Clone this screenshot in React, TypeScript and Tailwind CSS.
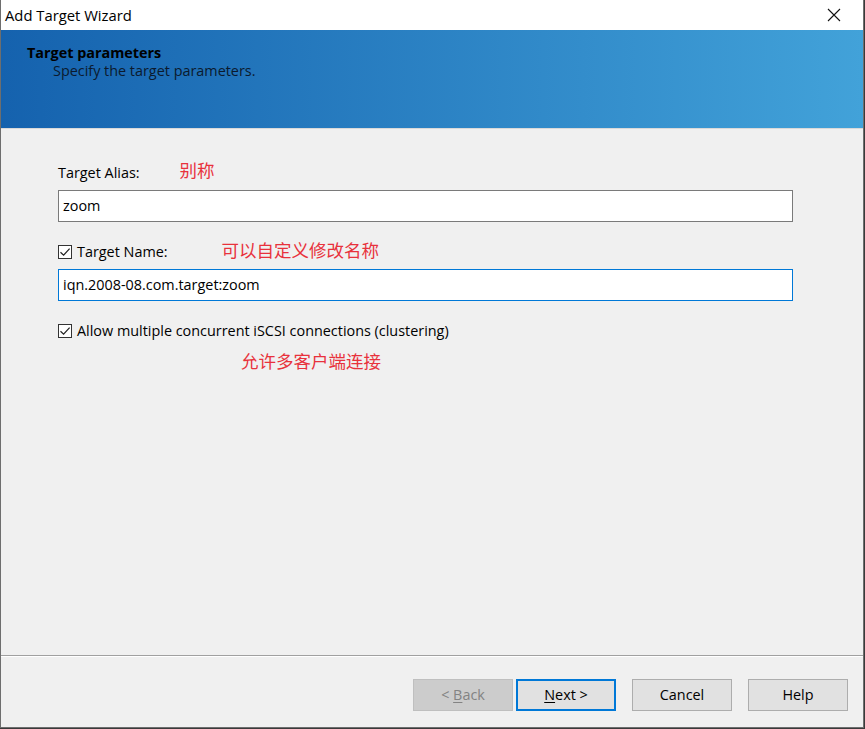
import React from 'react';

const font = { fontFamily: '"Open Sans", "Noto Sans", sans-serif' };

const CheckBox = () => (
  <span className="w-[14px] h-[14px] border border-[#333333] bg-white flex items-center justify-center shrink-0">
    <svg width="12" height="12" viewBox="0 0 12 12" fill="none">
      <path d="M1.5 6.2 L4.6 9.2 L10.6 2.6" stroke="#222" strokeWidth="1.2" />
    </svg>
  </span>
);

const Note = ({ children }: { children: React.ReactNode }) => (
  <span
    className="text-[17.5px] text-[#e8323c] leading-none"
    style={{ fontFamily: '"Noto Sans CJK SC", sans-serif' }}
  >
    {children}
  </span>
);

type BtnProps = {
  pre?: string;
  hot?: string;
  rest: string;
  disabled?: boolean;
  primary?: boolean;
};

const buttons: (BtnProps & { id: string })[] = [
  { id: 'back', pre: '<\u00a0', hot: 'B', rest: 'ack', disabled: true },
  { id: 'next', hot: 'N', rest: 'ext\u00a0>', primary: true },
  { id: 'cancel', rest: 'Cancel' },
  { id: 'help', rest: 'Help' },
];

function Btn({ pre, hot, rest, disabled, primary }: BtnProps) {
  return (
    <div
      className={`w-[100px] h-[32px] flex items-center justify-center text-[14.4px] whitespace-pre ${
        disabled
          ? 'bg-[#cccccc] border border-[#bfbfbf] text-[#838383]'
          : primary
          ? 'bg-[#e1e1e1] border-2 border-[#0078d7] text-black'
          : 'bg-[#e1e1e1] border border-[#adadad] text-black'
      }`}
    >
      <span>
        {pre}
        {hot ? <span className="underline underline-offset-2">{hot}</span> : null}
        {rest}
      </span>
    </div>
  );
}

export default function App() {
  return (
    <div className="w-[865px] h-[729px] bg-[#3a3a3a] overflow-hidden" style={font}>
      <div className="w-[864px] h-[728px] flex flex-col bg-[#f0f0f0] border-l border-r border-b border-[#6e6e6e]">
        {/* Title bar */}
        <div className="h-[30px] bg-white flex items-center justify-between pl-[4px] pr-[22px] shrink-0">
          <span className="text-[14.8px] text-black">Add Target Wizard</span>
          <svg width="14" height="14" viewBox="0 0 14 14">
            <path d="M1 1 L13 13 M13 1 L1 13" stroke="#111" strokeWidth="1.1" />
          </svg>
        </div>

        {/* Header */}
        <div className="h-[99px] shrink-0 bg-gradient-to-r from-[#1562ae] to-[#42a2d9] pl-[26px] pt-[14px] border-b border-[#d9d9d9]">
          <div className="text-[14.4px] font-bold text-black leading-[18px]">Target parameters</div>
          <div className="text-[14.4px] text-[#0b1a2e] leading-[18px] pl-[26px]">Specify the target parameters.</div>
        </div>

        {/* Body */}
        <div className="flex-1 pl-[57px] pr-[70px] pt-[33px] flex flex-col">
          <div className="flex items-center h-[22px]">
            <span className="text-[14.4px] text-black">Target Alias:</span>
            <span className="ml-[40px] -mt-[4px]"><Note>别称</Note></span>
          </div>
          <div className="mt-[6px] h-[32px] bg-white border border-[#7a7a7a] flex items-center px-[4px] text-[14.4px] text-black">
            zoom
          </div>

          <div className="flex items-center h-[22px] mt-[19px]">
            <CheckBox />
            <span className="ml-[5px] text-[14.4px] text-black">Target Name:</span>
            <span className="ml-[54px] -mt-[2px]"><Note>可以自定义修改名称</Note></span>
          </div>
          <div className="mt-[6px] h-[32px] bg-white border border-[#0078d7] flex items-center px-[4px] text-[14.4px] text-black">
            iqn.2008-08.com.target:zoom
          </div>

          <div className="flex items-center h-[22px] mt-[19px]">
            <CheckBox />
            <span className="ml-[5px] text-[14.4px] text-black">Allow multiple concurrent iSCSI connections (clustering)</span>
          </div>
          <div className="mt-[8px] pl-[183px]">
            <Note>允许多客户端连接</Note>
          </div>
        </div>

        {/* Footer */}
        <div className="h-[72px] shrink-0 border-t border-[#a0a0a0] shadow-[inset_0_1px_0_#ffffff] flex items-start justify-end pr-[15px] pt-[23px] gap-[16px]">
          <div className="flex gap-[3px]">
            {buttons.slice(0, 2).map(({ id, ...b }) => (
              <Btn key={id} {...b} />
            ))}
          </div>
          {buttons.slice(2).map(({ id, ...b }) => (
            <Btn key={id} {...b} />
          ))}
        </div>
      </div>
    </div>
  );
}
